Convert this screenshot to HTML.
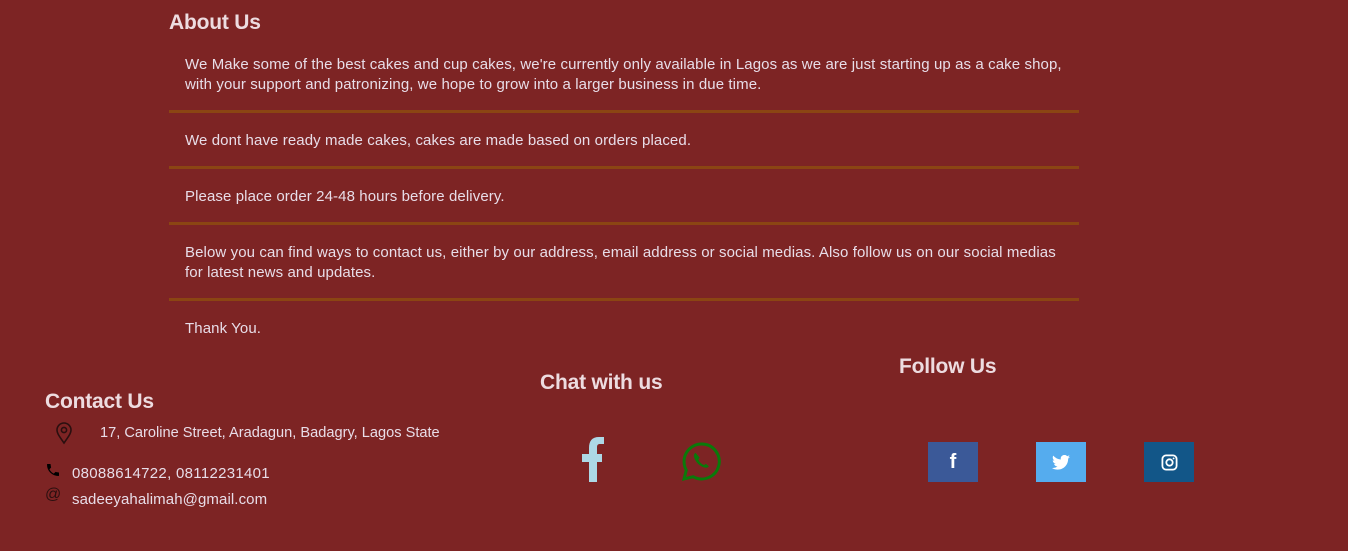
<!DOCTYPE html>
<html><head><meta charset="utf-8"><style>
body{margin:0;width:1348px;height:551px;background:#7D2424;font-family:"Liberation Sans",sans-serif;color:#E8DDE8;position:relative;overflow:hidden}
.a{position:absolute;white-space:nowrap}
h{position:absolute;font-weight:bold;font-size:21px;color:#EDDCE0;letter-spacing:-0.2px}
.t{position:absolute;left:185px;font-size:15px;line-height:20px;letter-spacing:0.1px;white-space:nowrap}
.d{position:absolute;left:169px;width:910px;height:3px;background:#8B4513}
.sq{position:absolute;top:442px;width:50px;height:40px;display:flex;align-items:center;justify-content:center}
</style></head><body>
<h style="left:169px;top:11px">About Us</h>
<div class="t" style="top:55px">We Make some of the best cakes and cup cakes, we're currently only available in Lagos as we are just starting up as a cake shop,<br>with your support and patronizing, we hope to grow into a larger business in due time.</div>
<div class="d" style="top:110px"></div>
<div class="t" style="top:131px">We dont have ready made cakes, cakes are made based on orders placed.</div>
<div class="d" style="top:166px"></div>
<div class="t" style="top:187px">Please place order 24-48 hours before delivery.</div>
<div class="d" style="top:222px"></div>
<div class="t" style="top:243px">Below you can find ways to contact us, either by our address, email address or social medias. Also follow us on our social medias<br>for latest news and updates.</div>
<div class="d" style="top:298px"></div>
<div class="t" style="top:319px">Thank You.</div>

<h style="left:45px;top:390px">Contact Us</h>
<svg class="a" style="left:55px;top:422px" width="18" height="23" viewBox="0 0 18 23"><path d="M9 21C4 14 2 11 2 8a7 7 0 0 1 14 0c0 3-2 6-7 13z" fill="none" stroke="#2a0f0f" stroke-width="1.6"/><circle cx="9" cy="8" r="2.6" fill="none" stroke="#2a0f0f" stroke-width="1.6"/></svg>
<div class="a" style="left:100px;top:425px;font-size:14.6px">17, Caroline Street, Aradagun, Badagry, Lagos State</div>
<svg class="a" style="left:45px;top:462px" width="16" height="16" viewBox="0 0 24 24"><path d="M6.6 10.8a15 15 0 0 0 6.6 6.6l2.2-2.2c.3-.3.7-.4 1-.2 1.1.4 2.3.6 3.6.6.6 0 1 .4 1 1V20c0 .6-.4 1-1 1A17 17 0 0 1 3 4c0-.6.4-1 1-1h3.5c.6 0 1 .4 1 1 0 1.3.2 2.5.6 3.6.1.3 0 .7-.2 1z" fill="#000"/></svg>
<div class="a" style="left:72px;top:465px;font-size:15px;letter-spacing:0.3px">08088614722, 08112231401</div>
<div class="a" style="left:45px;top:486px;font-size:16px;color:#2a0f0f">@</div>
<div class="a" style="left:72px;top:491px;font-size:15px;letter-spacing:0.1px">sadeeyahalimah@gmail.com</div>

<h style="left:540px;top:371px">Chat with us</h>
<svg class="a" style="left:582px;top:437px" width="22" height="45" viewBox="0 0 22 45"><path d="M7 45V25H0v-8h7v-6C7 4 10 0 17 0h5v7h-4c-2 0-3 1-3 3v7h5v8h-5v20z" fill="#ADD8E6"/></svg>
<svg class="a" style="left:680px;top:440px" width="43" height="43" viewBox="0 0 32 32"><path d="M16 3a13 13 0 0 0-11.3 19.4L3 29l6.8-1.7A13 13 0 1 0 16 3z" fill="none" stroke="#0a7a0a" stroke-width="2.2"/><path d="M11.5 9.5c-.8.6-1.5 1.8-1 3.3a12 12 0 0 0 7.7 7.7c1.5.5 2.7-.2 3.3-1l-2.3-1.8-1.3 1a8 8 0 0 1-4.3-4.3l1-1.3z" fill="#0a7a0a"/></svg>

<h style="left:899px;top:355px">Follow Us</h>
<div class="sq" style="left:928px;background:#3B5998;color:#fff;font-weight:bold;font-size:20px">f</div>
<div class="sq" style="left:1036px;background:#55ACEE"><svg width="18" height="15" viewBox="0 0 24 20"><path d="M24 2.4a10 10 0 0 1-2.8.8A5 5 0 0 0 23.3.4a10 10 0 0 1-3.1 1.2A4.9 4.9 0 0 0 11.8 6 14 14 0 0 1 1.7.9a4.9 4.9 0 0 0 1.5 6.6 5 5 0 0 1-2.2-.6 4.9 4.9 0 0 0 3.9 4.9 5 5 0 0 1-2.2.1 4.9 4.9 0 0 0 4.6 3.4A9.9 9.9 0 0 1 0 17.3 14 14 0 0 0 7.5 19.5c9 0 14-7.5 14-14v-.6A10 10 0 0 0 24 2.4z" fill="#fff"/></svg></div>
<div class="sq" style="left:1144px;background:#125688"><svg width="17" height="17" viewBox="0 0 24 24"><rect x="2" y="2" width="20" height="20" rx="5" fill="none" stroke="#fff" stroke-width="2.5"/><circle cx="12" cy="12" r="4.5" fill="none" stroke="#fff" stroke-width="2.5"/><circle cx="17.8" cy="6.2" r="1.3" fill="#fff"/></svg></div>
</body></html>
